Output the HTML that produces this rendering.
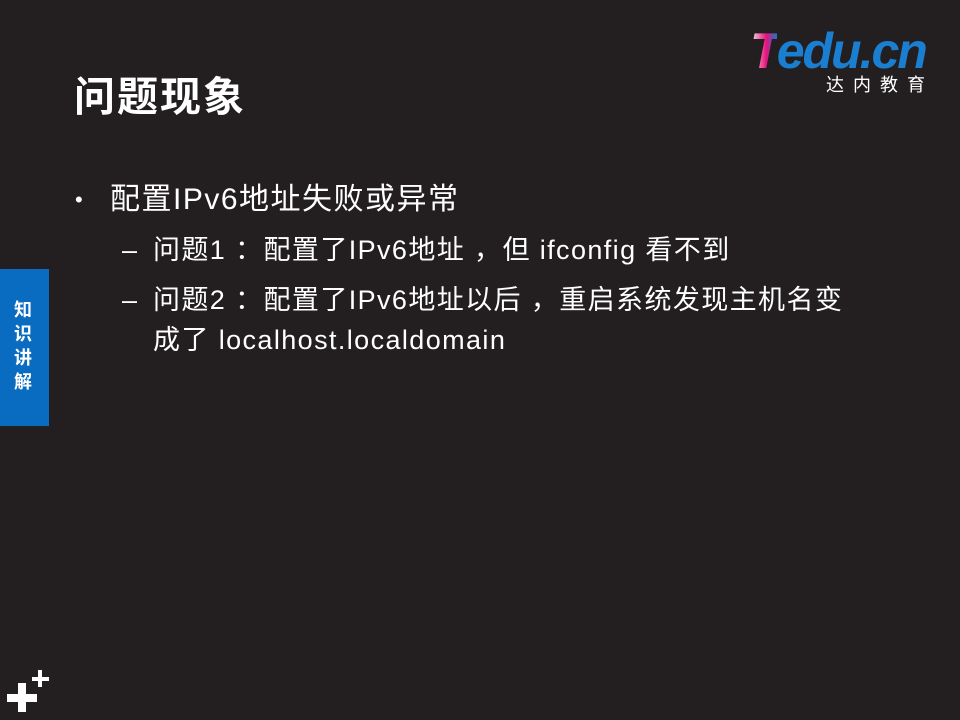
<!DOCTYPE html>
<html><head><meta charset="utf-8"><style>
body{margin:0;width:960px;height:720px;background:#231f20;position:relative;overflow:hidden;font-family:"Liberation Sans","Noto Sans CJK SC",sans-serif;color:#fff}
.a{position:absolute;white-space:nowrap}
.s{font-size:27px;line-height:32px;letter-spacing:1.4px}
</style></head><body>
<div class="a" style="left:74px;top:72px;font-size:41px;font-weight:bold;line-height:50px;letter-spacing:2px">问题现象</div>
<div class="a" style="left:750px;top:23px;font-size:50px;font-weight:bold;font-style:italic;line-height:56px;letter-spacing:-2px"><span style="background:linear-gradient(90deg,#f0f0f0,#e8127d 60%,#1a76c8);-webkit-background-clip:text;color:transparent">T</span><span style="color:#1a7fd0">edu.cn</span></div>
<div class="a" style="left:826px;top:74px;font-size:18px;letter-spacing:9px;line-height:22px">达内教育</div>
<div class="a" style="left:0;top:269px;width:49px;height:157px;background:#0a6cc0"></div>
<div class="a" style="left:14px;top:298px;font-size:18px;font-weight:bold;line-height:24px;white-space:normal;width:20px">知识讲解</div>
<div class="a" style="left:75px;top:182px;font-size:22px;line-height:36px">•</div>
<div class="a" style="left:110px;top:182px;font-size:30px;line-height:36px;letter-spacing:1.5px">配置IPv6地址失败或异常</div>
<div class="a s" style="left:122px;top:234px">–</div>
<div class="a s" style="left:153px;top:234px">问题1 ：配置了IPv6地址 ，但 ifconfig 看不到</div>
<div class="a s" style="left:122px;top:284px">–</div>
<div class="a s" style="left:153px;top:284px">问题2 ：配置了IPv6地址以后 ，重启系统发现主机名变</div>
<div class="a s" style="left:153px;top:324px">成了 localhost.localdomain</div>
<svg class="a" style="left:0;top:660px" width="60" height="60"><path d="M18 683h8v29h-8zM7 694h30v8H7z" transform="translate(0,-660)" fill="#fff"/><path d="M38 670h4v17h-4zM32 677h17v4H32z" transform="translate(0,-660)" fill="#fff"/></svg>
</body></html>
